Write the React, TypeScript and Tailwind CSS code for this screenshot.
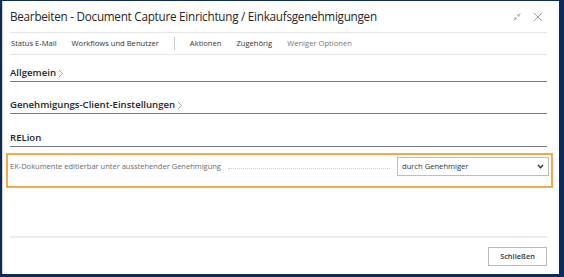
import { X } from 'lucide-react';

const menu = ['Status E-Mail', 'Workflows und Benutzer'];
const menu2 = ['Aktionen', 'Zugehörig'];

function Section({ title, chevron, h }: { title: string; chevron?: boolean; h: string }) {
  return (
    <div className={`${h} flex items-end border-b border-[#7a7a7a]`}>
      <div className="flex items-center pb-[3px] text-[9.6px] font-semibold text-[#262626] leading-none">
        <span>{title}</span>
        {chevron && (
          <svg width="6" height="9" viewBox="0 0 6 9" className="ml-[2px] mt-[1px]">
            <path d="M1 1 L4.5 4.5 L1 8" stroke="#9a9a9a" strokeWidth="0.9" fill="none" />
          </svg>
        )}
      </div>
    </div>
  );
}

export default function App() {
  return (
    <div
      className="w-[564px] h-[277px] bg-[#0d2a5c] pl-[2px] pt-[1px] pr-[5px] pb-[3px]"
      style={{ fontFamily: '"Open Sans", "Noto Sans", sans-serif' }}
    >
      <div className="w-full h-full bg-white border-l border-[#c9ced8] flex flex-col">
        {/* Header */}
        <div className="pl-[7px] pr-[12px]">
          <div className="h-[32px] flex items-center justify-between border-b border-[#e6e6e6]">
            <h1 className="text-[11.7px] text-[#262626] tracking-[-0.25px] pt-[1px]">
              Bearbeiten - Document Capture Einrichtung / Einkaufsgenehmigungen
            </h1>
            <div className="flex items-center gap-[9px] pr-[2px]">
              <svg width="10" height="10" viewBox="0 0 10 10">
                <path d="M1.5 8.5 L4 6" stroke="#8a8a8a" strokeWidth="0.8" />
                <path d="M2.3 6 H4 V7.7" stroke="#8a8a8a" strokeWidth="0.8" fill="none" />
                <path d="M8.5 1.5 L6 4" stroke="#8a8a8a" strokeWidth="0.8" />
                <path d="M6 2.3 V4 H7.7" stroke="#8a8a8a" strokeWidth="0.8" fill="none" />
              </svg>
              <X size={14} strokeWidth={1.2} className="text-[#6e6e6e]" />
            </div>
          </div>
          <div className="h-[22px] flex items-center border-b border-[#e6e6e6] text-[7.6px] text-[#333]">
            <div className="flex items-center gap-[15px] pl-[1px]">
              {menu.map((m) => (
                <span key={m}>{m}</span>
              ))}
            </div>
            <div className="w-px h-[13px] bg-[#c8c8c8] mx-[15px]" />
            <div className="flex items-center gap-[15px]">
              {menu2.map((m) => (
                <span key={m}>{m}</span>
              ))}
              <span className="text-[#777]">Weniger Optionen</span>
            </div>
          </div>

          <Section title="Allgemein" chevron h="h-[27px]" />
          <Section title="Genehmigungs-Client-Einstellungen" chevron h="h-[32px]" />
          <Section title="RELion" h="h-[33px]" />
        </div>

        {/* Highlighted field */}
        <div className="ml-[3px] mr-[6px] mt-[6px] h-[35px] border-2 border-[#f5a94a] pl-[2px] pr-[2px] pt-[2px]">
          <div className="flex items-center h-[19px]">
            <span className="text-[7.5px] text-[#6b6b6b] whitespace-nowrap">
              EK-Dokumente editierbar unter ausstehender Genehmigung
            </span>
            <div className="flex-1 mx-[7px] border-b border-dotted border-[#cfcfcf] mt-[3px]" />
            <div className="w-[152px] h-[19px] border border-[#bdbdbd] flex items-center justify-between pl-[4px] pr-[4px] text-[7.6px] text-[#333]">
              <span>durch Genehmiger</span>
              <svg width="7" height="5" viewBox="0 0 7 5">
                <path d="M1 1 L3.5 3.8 L6 1" stroke="#333" strokeWidth="1.4" fill="none" />
              </svg>
            </div>
          </div>
        </div>

        <div className="flex-1" />

        {/* Footer */}
        <div className="pl-[7px] pr-[12px]">
          <div className="border-t-2 border-[#ececec] h-[38px] flex items-center justify-end">
            <button className="w-[59px] h-[19px] border border-[#b8b8b8] bg-white text-[7.4px] font-semibold text-[#333] mt-[1px]">
              Schließen
            </button>
          </div>
        </div>
      </div>
    </div>
  );
}
